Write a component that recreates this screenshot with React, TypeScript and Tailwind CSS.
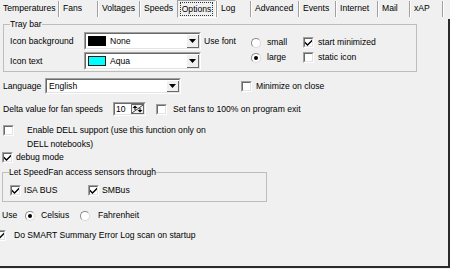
import clsx from "clsx";
import type { ReactNode } from "react";

const tabs = [
  { label: "Temperatures", w: "w-[58px]", sep: true },
  { label: "Fans", w: "w-[37px]", sep: true },
  { label: "Voltages", w: "w-[40px]", sep: true },
  { label: "Speeds", w: "w-[36px]", sep: false },
  { label: "Options", w: "w-[39px]", sep: true, active: true },
  { label: "Log", w: "w-[32px]", sep: true },
  { label: "Advanced", w: "w-[46px]", sep: true },
  { label: "Events", w: "w-[35px]", sep: true },
  { label: "Internet", w: "w-[40px]", sep: true },
  { label: "Mail", w: "w-[30px]", sep: true },
  { label: "xAP", w: "w-[31px]", sep: true },
];

const TabBar = () => (
  <div className="flex h-[19px]">
    {tabs.map((t) => (
      <div key={t.label} className="flex">
        {t.active ? (
          <div className={clsx(t.w, "flex h-[18px] items-center justify-center border border-t-[#a0a0a0] border-l-[#a0a0a0] border-r-white border-b-white")}>
            <span className="border border-dotted border-[#333] px-[1px] leading-[12px]">{t.label}</span>
          </div>
        ) : (
          <div className={clsx(t.w, "flex h-[17px] items-center pl-[3px]")}>{t.label}</div>
        )}
        {t.sep && <span className="mt-[1px] h-[16px] w-[2px] border-l border-r border-l-[#a0a0a0] border-r-white" />}
      </div>
    ))}
  </div>
);

const CheckMark = () => (
  <svg width="7" height="7" viewBox="0 0 7 7">
    <path d="M0 2.5 L2.5 5 L7 0.5 L7 2.5 L2.5 7 L0 4.5 Z" fill="#000" />
  </svg>
);

const CheckBox = ({ checked, className }: { checked?: boolean; className?: string }) => (
  <span className={clsx("flex h-[11px] w-[11px] shrink-0 border border-t-[#a0a0a0] border-l-[#a0a0a0] border-r-white border-b-white", className)}>
    <span className="flex flex-1 items-center justify-center border border-t-[#696969] border-l-[#696969] border-r-[#e3e3e3] border-b-[#e3e3e3] bg-white">
      {checked && <CheckMark />}
    </span>
  </span>
);

const Radio = ({ checked }: { checked?: boolean }) => (
  <span className="flex h-[10px] w-[10px] shrink-0 items-center justify-center rounded-full border border-[#8a8a8a] border-r-[#d8d8d8] border-b-[#d8d8d8] bg-white">
    {checked && <span className="h-[4px] w-[4px] rounded-full bg-black" />}
  </span>
);

const DropButton = () => (
  <div className="flex w-[13px] items-center justify-center bg-[#f0f0f0] shadow-[inset_1px_1px_0_#fff,inset_-1px_-1px_0_#696969]">
    <svg width="7" height="4" viewBox="0 0 7 4">
      <path d="M0 0h7L3.5 4z" fill="#000" />
    </svg>
  </div>
);

const Combo = ({ className, children }: { className: string; children: ReactNode }) => (
  <div className={clsx("flex border border-t-[#a0a0a0] border-l-[#a0a0a0] border-r-white border-b-white", className)}>
    <div className="flex flex-1 border border-t-[#696969] border-l-[#696969] border-r-[#e3e3e3] border-b-[#e3e3e3] bg-white">
      <div className="flex flex-1 items-center gap-[4px] pl-[2px]">{children}</div>
      <DropButton />
    </div>
  </div>
);

const Spin = () => (
  <svg width="13" height="10" viewBox="0 0 13 10" className="self-center">
    <rect x="0.5" y="0.5" width="12" height="9" fill="#f0f0f0" stroke="#696969" />
    <path d="M1 9 L12 1" stroke="#404040" />
    <path d="M4 1.5 L1.5 4 L6.5 4 Z" fill="#000" />
    <rect x="3.5" y="4" width="1" height="2" fill="#000" />
    <path d="M9 8.5 L6.5 6 L11.5 6 Z" fill="#000" />
    <rect x="8.5" y="4" width="1" height="2" fill="#000" />
  </svg>
);

const App = () => {
  return (
    <div className="h-[269px] w-[450px] overflow-hidden bg-[#f0f0f0] font-['Liberation_Sans',Arial,sans-serif] text-[8.6px] leading-[11px] text-black">
      <TabBar />
      <div className="flex h-[249px] flex-col overflow-hidden border-r-2 border-b-2 border-[#2a2a2a]">
        {/* Tray bar */}
        <fieldset className="ml-[3px] w-[414px] border border-[#bdbdbd] px-[6px] pt-[2px] pb-[1px]">
          <legend className="leading-[11px]">Tray bar</legend>
          <div className="flex items-start">
            <div className="flex flex-col gap-[2px]">
              <div className="flex h-[18px]">
                <span className="flex w-[74px] items-center">Icon background</span>
                <Combo className="w-[117px]">
                  <span className="h-[10px] w-[18px] bg-black" />
                  None
                </Combo>
              </div>
              <div className="flex h-[18px]">
                <span className="flex w-[74px] items-center">Icon text</span>
                <Combo className="w-[117px]">
                  <span className="h-[10px] w-[18px] border border-[#1a1a1a] bg-[#00ffff]" />
                  Aqua
                </Combo>
              </div>
            </div>
            <span className="ml-[3px] flex h-[18px] w-[47px] items-center">Use font</span>
            <div className="flex w-[52px] flex-col pt-[3px]">
              <label className="flex h-[15px] items-center gap-[6px]">
                <Radio />
                small
              </label>
              <label className="flex h-[15px] items-center gap-[6px]">
                <Radio checked />
                large
              </label>
            </div>
            <div className="flex flex-col pt-[3px]">
              <label className="flex h-[15px] items-center gap-[4px]">
                <CheckBox checked />
                start minimized
              </label>
              <label className="flex h-[15px] items-center gap-[4px]">
                <CheckBox />
                static icon
              </label>
            </div>
          </div>
        </fieldset>

        <div className="mt-[6px] flex h-[16px] pl-[3px]">
          <span className="flex w-[42px] items-center">Language</span>
          <Combo className="w-[136px]">English</Combo>
          <label className="ml-[60px] flex items-center gap-[4px]">
            <CheckBox />
            Minimize on close
          </label>
        </div>

        <div className="mt-[8px] flex h-[14px] pl-[3px]">
          <span className="flex w-[110px] items-center">Delta value for fan speeds</span>
          <div className="flex w-[33px] border border-t-[#a0a0a0] border-l-[#a0a0a0] border-r-white border-b-white">
            <div className="flex flex-1 justify-between border border-t-[#696969] border-l-[#696969] border-r-[#e3e3e3] border-b-[#e3e3e3] bg-white">
              <span className="flex items-center pl-[1px]">10</span>
              <Spin />
            </div>
          </div>
          <label className="ml-[10px] flex items-center gap-[6px]">
            <CheckBox />
            Set fans to 100% on program exit
          </label>
        </div>

        <div className="mt-[7px] flex items-start pl-[3px]">
          <CheckBox className="mt-[2px]" />
          <span className="ml-[13px] leading-[14px]">
            Enable DELL support (use this function only on
            <br />
            DELL notebooks)
          </span>
        </div>

        <label className="flex h-[13px] items-center gap-[3px] pl-[2px]">
          <CheckBox checked />
          debug mode
        </label>

        <fieldset className="mt-[3px] ml-[2px] w-[265px] border border-[#bdbdbd] px-[6px] pt-[6px] pb-[4px]">
          <legend className="leading-[11px]">Let SpeedFan access sensors through</legend>
          <div className="flex h-[13px] items-center">
            <label className="ml-[1px] flex w-[78px] items-center gap-[3px]">
              <CheckBox checked />
              ISA BUS
            </label>
            <label className="flex items-center gap-[3px]">
              <CheckBox checked />
              SMBus
            </label>
          </div>
        </fieldset>

        <div className="mt-[7px] flex h-[13px] items-center pl-[2px]">
          <span className="w-[23px]">Use</span>
          <label className="flex w-[55px] items-center gap-[6px]">
            <Radio checked />
            Celsius
          </label>
          <label className="flex items-center gap-[8px]">
            <Radio />
            Fahrenheit
          </label>
        </div>

        <label className="mt-[7px] -ml-[5px] flex h-[13px] items-center gap-[8px]">
          <CheckBox checked />
          Do SMART Summary Error Log scan on startup
        </label>
      </div>
    </div>
  );
};

export default App;
